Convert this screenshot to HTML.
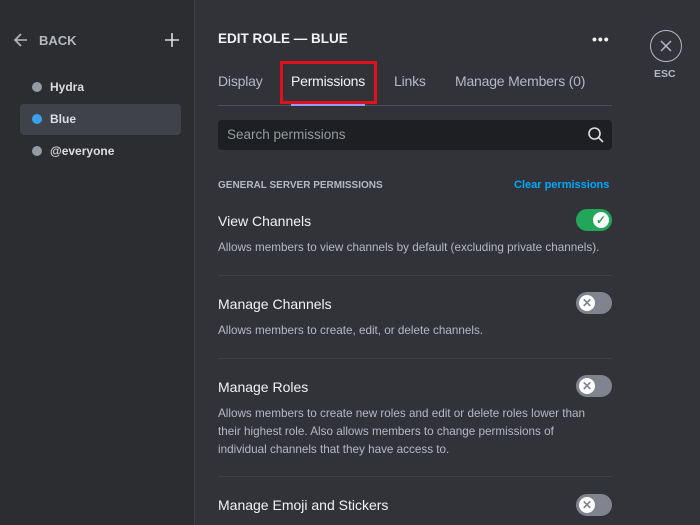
<!DOCTYPE html>
<html><head><style>
*{margin:0;padding:0;box-sizing:border-box}
body{width:700px;height:525px;overflow:hidden;background:#313338;font-family:"Liberation Sans",sans-serif;position:relative;color:#dbdee1}
.side{position:absolute;left:0;top:0;width:195px;height:525px;background:#2b2d31;border-right:1px solid #3f4147}
.abs{position:absolute}
.role{position:absolute;left:20px;width:161px;height:31px;font-size:12px;font-weight:bold;color:#dbdee1;line-height:31px;padding-left:30px;border-radius:4px}
.role i{position:absolute;left:12px;top:10px;width:10px;height:10px;border-radius:50%;background:#949ba4}
.tab{position:absolute;top:73px;font-size:14px;color:#b5bac1;letter-spacing:-0.2px}
.title{position:absolute;left:218px;font-size:14px;color:#f2f3f5}
.desc{position:absolute;left:218px;font-size:11.7px;color:#b5bac1;line-height:18px;width:410px}
.sep{position:absolute;left:218px;width:394px;height:1px;background:#3f4147}
.tg{position:absolute;left:576px;width:36px;height:22px;border-radius:11px;background:#80848e}
.tg b{position:absolute;left:3px;top:3px;width:16px;height:16px;border-radius:50%;background:#fff;color:#80848e;font-size:12px;line-height:16px;text-align:center}
.tg.on{background:#23a55a}.tg.on b{left:17px;color:#23a55a}
</style></head><body>
<div class="side">
<svg class="abs" style="left:13px;top:32px" width="16" height="16" viewBox="0 0 16 16"><path d="M14 8H2M8 2L2 8l6 6" stroke="#b5bac1" stroke-width="1.6" fill="none"/></svg>
<div class="abs" style="left:39px;top:33px;font-size:13px;font-weight:bold;color:#b5bac1">BACK</div>
<svg class="abs" style="left:164px;top:32px" width="16" height="16" viewBox="0 0 16 16"><path d="M8 1v14M1 8h14" stroke="#dbdee1" stroke-width="1.6"/></svg>
<div class="role" style="top:72px"><i></i>Hydra</div>
<div class="role" style="top:104px;background:#404249"><i style="background:#3ba0f0"></i>Blue</div>
<div class="role" style="top:136px"><i></i>@everyone</div>
</div>
<div class="abs" style="left:218px;top:31px;font-size:13.5px;font-weight:bold;color:#f2f3f5">EDIT ROLE — BLUE</div>
<div class="abs" style="left:592px;top:31px;font-size:14px;font-weight:bold;color:#f2f3f5;letter-spacing:1px">•••</div>
<div class="abs" style="left:650px;top:30px;width:32px;height:32px;border:1.5px solid #b5bac1;border-radius:50%"></div>
<svg class="abs" style="left:658px;top:38px" width="16" height="16" viewBox="0 0 16 16"><path d="M3 3l10 10M13 3L3 13" stroke="#b5bac1" stroke-width="1.5"/></svg>
<div class="abs" style="left:654px;top:68px;font-size:10.5px;font-weight:bold;color:#b5bac1">ESC</div>
<div class="tab" style="left:218px">Display</div>
<div class="tab" style="left:291px;color:#f2f3f5">Permissions</div>
<div class="tab" style="left:394px">Links</div>
<div class="tab" style="left:455px">Manage Members (0)</div>
<div class="abs" style="left:218px;top:105px;width:394px;height:1px;background:#4e5058"></div>
<div class="abs" style="left:291px;top:104px;width:74px;height:2px;background:#949cf7"></div>
<div class="abs" style="left:280px;top:61px;width:97px;height:43px;border:3px solid #e0101c"></div>
<div class="abs" style="left:218px;top:120px;width:394px;height:30px;background:#1e1f22;border-radius:4px"></div>
<div class="abs" style="left:227px;top:127px;font-size:13.5px;color:#949ba4">Search permissions</div>
<svg class="abs" style="left:587px;top:126px" width="18" height="18" viewBox="0 0 18 18"><circle cx="7.5" cy="7.5" r="5.5" stroke="#dbdee1" stroke-width="1.6" fill="none"/><path d="M11.5 11.5l4.5 4.5" stroke="#dbdee1" stroke-width="1.6"/></svg>
<div class="abs" style="left:218px;top:180px;font-size:10px;font-weight:bold;color:#b5bac1">GENERAL SERVER PERMISSIONS</div>
<div class="abs" style="left:514px;top:179px;font-size:11px;font-weight:bold;color:#00a8fc">Clear permissions</div>
<div class="title" style="top:213px">View Channels</div>
<div class="tg on" style="top:209px"><b>✓</b></div>
<div class="desc" style="top:239px">Allows members to view channels by default (excluding private channels).</div>
<div class="sep" style="top:275px"></div>
<div class="title" style="top:296px">Manage Channels</div>
<div class="tg" style="top:292px"><b>✕</b></div>
<div class="desc" style="top:322px">Allows members to create, edit, or delete channels.</div>
<div class="sep" style="top:358px"></div>
<div class="title" style="top:379px">Manage Roles</div>
<div class="tg" style="top:375px"><b>✕</b></div>
<div class="desc" style="top:405px">Allows members to create new roles and edit or delete roles lower than<br>their highest role. Also allows members to change permissions of<br>individual channels that they have access to.</div>
<div class="sep" style="top:476px"></div>
<div class="title" style="top:497px">Manage Emoji and Stickers</div>
<div class="tg" style="top:494px"><b>✕</b></div>
</body></html>
